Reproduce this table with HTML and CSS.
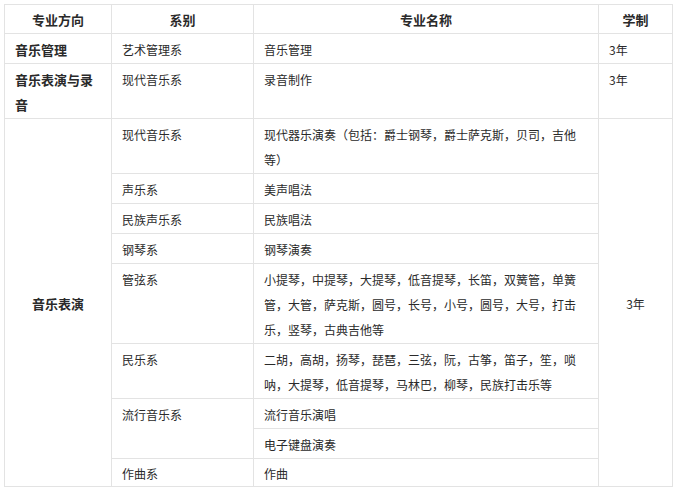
FILE: index.html
```html
<!DOCTYPE html>
<html lang="zh-CN">
<head>
<meta charset="utf-8">
<title>专业设置</title>
<link rel="stylesheet" href="styles.css">
</head>
<body>
<table class="majors">
  <colgroup>
    <col class="c-dir">
    <col class="c-dept">
    <col class="c-name">
    <col class="c-len">
  </colgroup>
  <thead>
    <tr>
      <th>专业方向</th>
      <th>系别</th>
      <th>专业名称</th>
      <th>学制</th>
    </tr>
  </thead>
  <tbody>
    <tr>
      <td class="dir">音乐管理</td>
      <td>艺术管理系</td>
      <td>音乐管理</td>
      <td>3年</td>
    </tr>
    <tr>
      <td class="dir">音乐表演与录音</td>
      <td>现代音乐系</td>
      <td>录音制作</td>
      <td>3年</td>
    </tr>
    <tr>
      <td class="dir mid" rowspan="10">音乐表演</td>
      <td>现代音乐系</td>
      <td class="name">现代器乐演奏（包括：爵士钢琴，爵士萨克斯，贝司，吉他等）</td>
      <td class="len mid" rowspan="10">3年</td>
    </tr>
    <tr>
      <td>声乐系</td>
      <td>美声唱法</td>
    </tr>
    <tr>
      <td>民族声乐系</td>
      <td>民族唱法</td>
    </tr>
    <tr>
      <td>钢琴系</td>
      <td>钢琴演奏</td>
    </tr>
    <tr>
      <td>管弦系</td>
      <td class="name">小提琴，中提琴，大提琴，低音提琴，长笛，双簧管，单簧管，大管，萨克斯，圆号，长号，小号，圆号，大号，打击乐，竖琴，古典吉他等</td>
    </tr>
    <tr>
      <td>民乐系</td>
      <td class="name">二胡，高胡，扬琴，琵琶，三弦，阮，古筝，笛子，笙，唢呐，大提琴，低音提琴，马林巴，柳琴，民族打击乐等</td>
    </tr>
    <tr>
      <td rowspan="2">流行音乐系</td>
      <td>流行音乐演唱</td>
    </tr>
    <tr>
      <td>电子键盘演奏</td>
    </tr>
    <tr class="last">
      <td>作曲系</td>
      <td>作曲</td>
    </tr>
  </tbody>
</table>
</body>
</html>
```

FILE: styles.css
```css
html, body {
  margin: 0;
  padding: 0;
  background: #ffffff;
}

body {
  padding: 4px 0 0 4px;
  font-family: "Noto Sans CJK SC", "Noto Sans", sans-serif;
  color: #2a2a2a;
}

.majors {
  border-collapse: collapse;
  table-layout: fixed;
  width: 668px;
  font-size: 12px;
  line-height: 25px;
}

.c-dir { width: 107px; }
.c-dept { width: 142px; }
.c-name { width: 345px; }
.c-len { width: 74px; }

.majors th,
.majors td {
  border: 1px solid #e3e3e3;
  padding: 3px 10px 1px 10px;
  vertical-align: top;
  text-align: left;
}

.majors th {
  padding: 2px 10px 1px 10px;
  font-size: 13px;
  font-weight: bold;
  text-align: center;
  color: #2a2a2a;
}

.majors td.dir {
  font-size: 13px;
  font-weight: bold;
}

.majors td.name {
  padding-right: 18px;
}

.majors .last td {
  padding-top: 2px;
  padding-bottom: 0;
}

.majors td.mid {
  vertical-align: middle;
  text-align: center;
}
```
